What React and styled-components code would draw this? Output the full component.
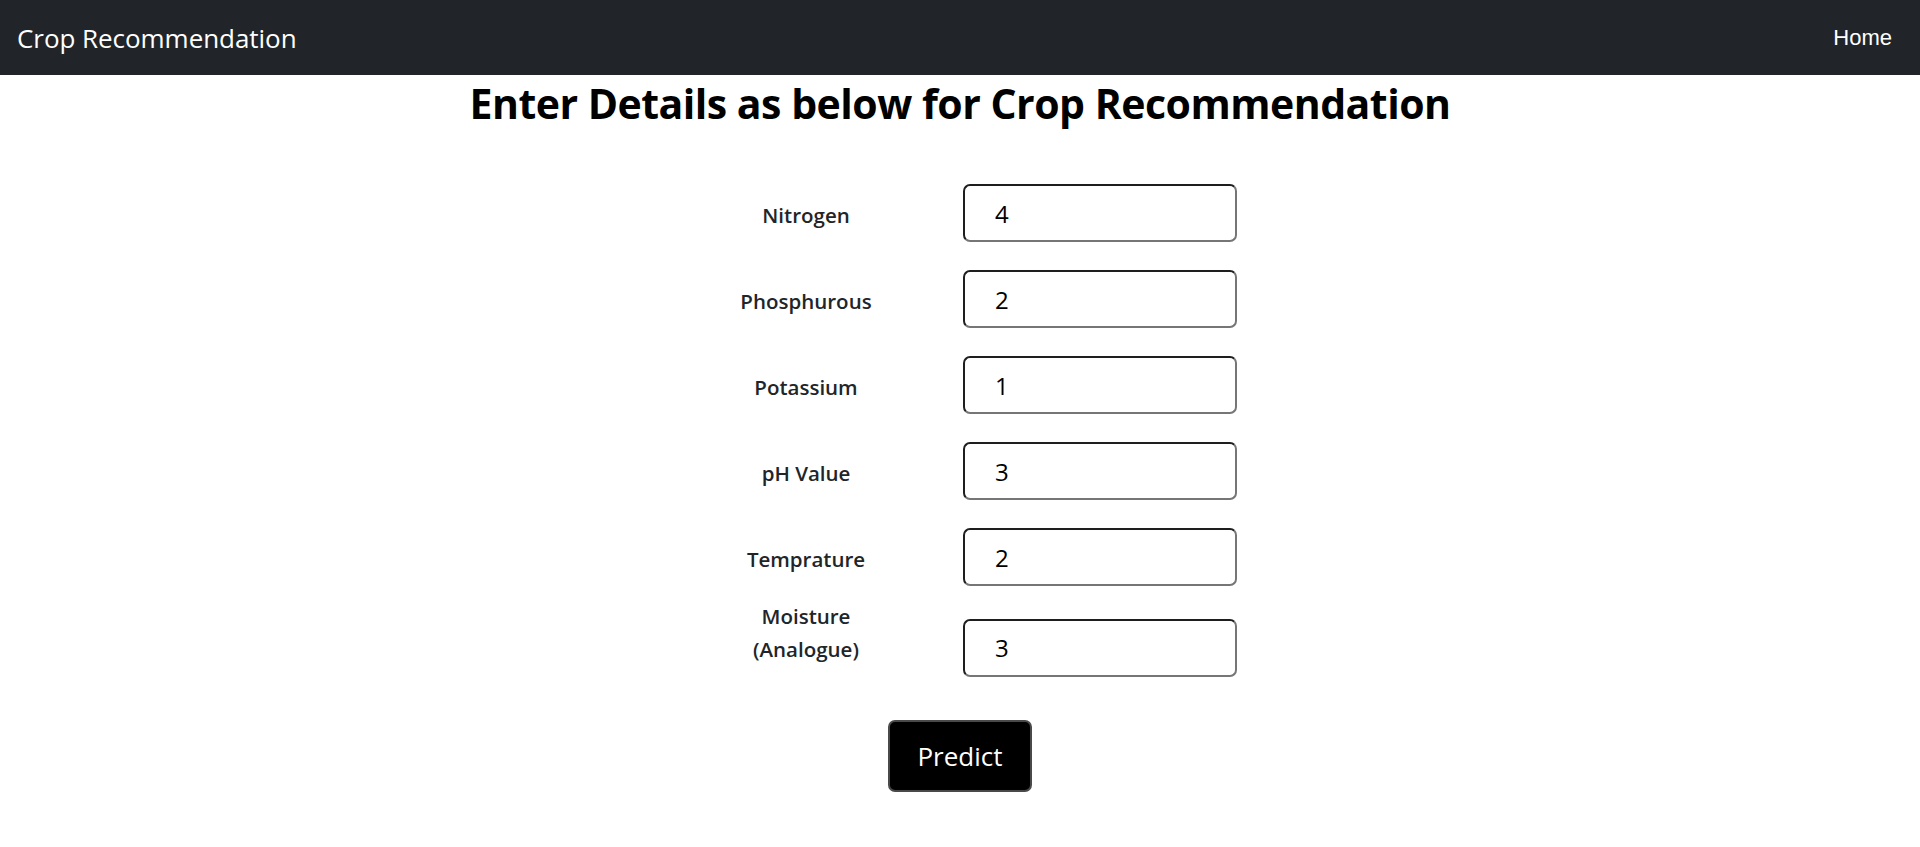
import React from "react";
import styled, { createGlobalStyle } from "styled-components";

const Global = createGlobalStyle`
  * { box-sizing: border-box; }
  body {
    margin: 0;
    background: #ffffff;
    font-family: "Open Sans", "Noto Sans", sans-serif;
    color: #212529;
  }
`;

const NavBar = styled.nav`
  height: 75px;
  background: #212529;
  display: flex;
  align-items: center;
  justify-content: space-between;
  padding: 0 28px 0 17px;
`;

const Brand = styled.a`
  color: #ffffff;
  font-family: "Open Sans", sans-serif;
  font-size: 26px;
  text-decoration: none;
  letter-spacing: -0.05px;
`;

const NavLink = styled.a`
  color: #ffffff;
  font-family: "Liberation Sans", Arial, sans-serif;
  font-size: 22px;
  text-decoration: none;
`;

const Main = styled.main`
  display: flex;
  flex-direction: column;
  align-items: center;
`;

const Title = styled.h1`
  margin: 3px 0 0;
  font-family: "Open Sans", sans-serif;
  font-weight: 700;
  font-size: 41px;
  line-height: 50px;
  color: #000;
  letter-spacing: -0.5px;
`;

const Form = styled.form`
  margin-top: 42px;
  display: flex;
  flex-direction: column;
  align-items: center;
`;

const Row = styled.div`
  display: flex;
  align-items: last baseline;
`;

const Label = styled.label`
  width: 246px;
  margin-right: 34px;
  text-align: center;
  font-weight: 600;
  font-size: 20.5px;
  line-height: 33px;
  color: #212529;
`;

const Input = styled.input`
  width: 274px;
  height: 58px;
  margin: 14px 0;
  padding: 0 30px;
  font-family: "Open Sans", sans-serif;
  font-size: 24px;
  color: #000;
  background: #fff;
  border: 2px solid;
  border-color: #1e1e1e #767676 #767676 #1e1e1e;
  border-radius: 7px;
  outline: none;
`;

const Button = styled.button`
  margin-top: 29px;
  width: 144px;
  height: 72px;
  background: #000;
  color: #fff;
  border: 2px solid #4a4a4a;
  border-radius: 7px;
  font-family: "Open Sans", sans-serif;
  font-size: 26px;
  cursor: pointer;
`;

const fields = [
  { label: "Nitrogen", value: "4" },
  { label: "Phosphurous", value: "2" },
  { label: "Potassium", value: "1" },
  { label: "pH Value", value: "3" },
  { label: "Temprature", value: "2" },
  { label: ["Moisture", "(Analogue)"], value: "3" },
];

export default function App() {
  return (
    <>
      <Global />
      <NavBar>
        <Brand href="#">Crop Recommendation</Brand>
        <NavLink href="#">Home</NavLink>
      </NavBar>
      <Main>
        <Title>Enter Details as below for Crop Recommendation</Title>
        <Form onSubmit={(e) => e.preventDefault()}>
          {fields.map((f, i) => (
            <Row key={i}>
              <Label>
                {Array.isArray(f.label) ? (
                  <>
                    {f.label[0]}
                    <br />
                    {f.label[1]}
                  </>
                ) : (
                  f.label
                )}
              </Label>
              <Input type="text" defaultValue={f.value} />
            </Row>
          ))}
          <Button type="submit">Predict</Button>
        </Form>
      </Main>
    </>
  );
}
